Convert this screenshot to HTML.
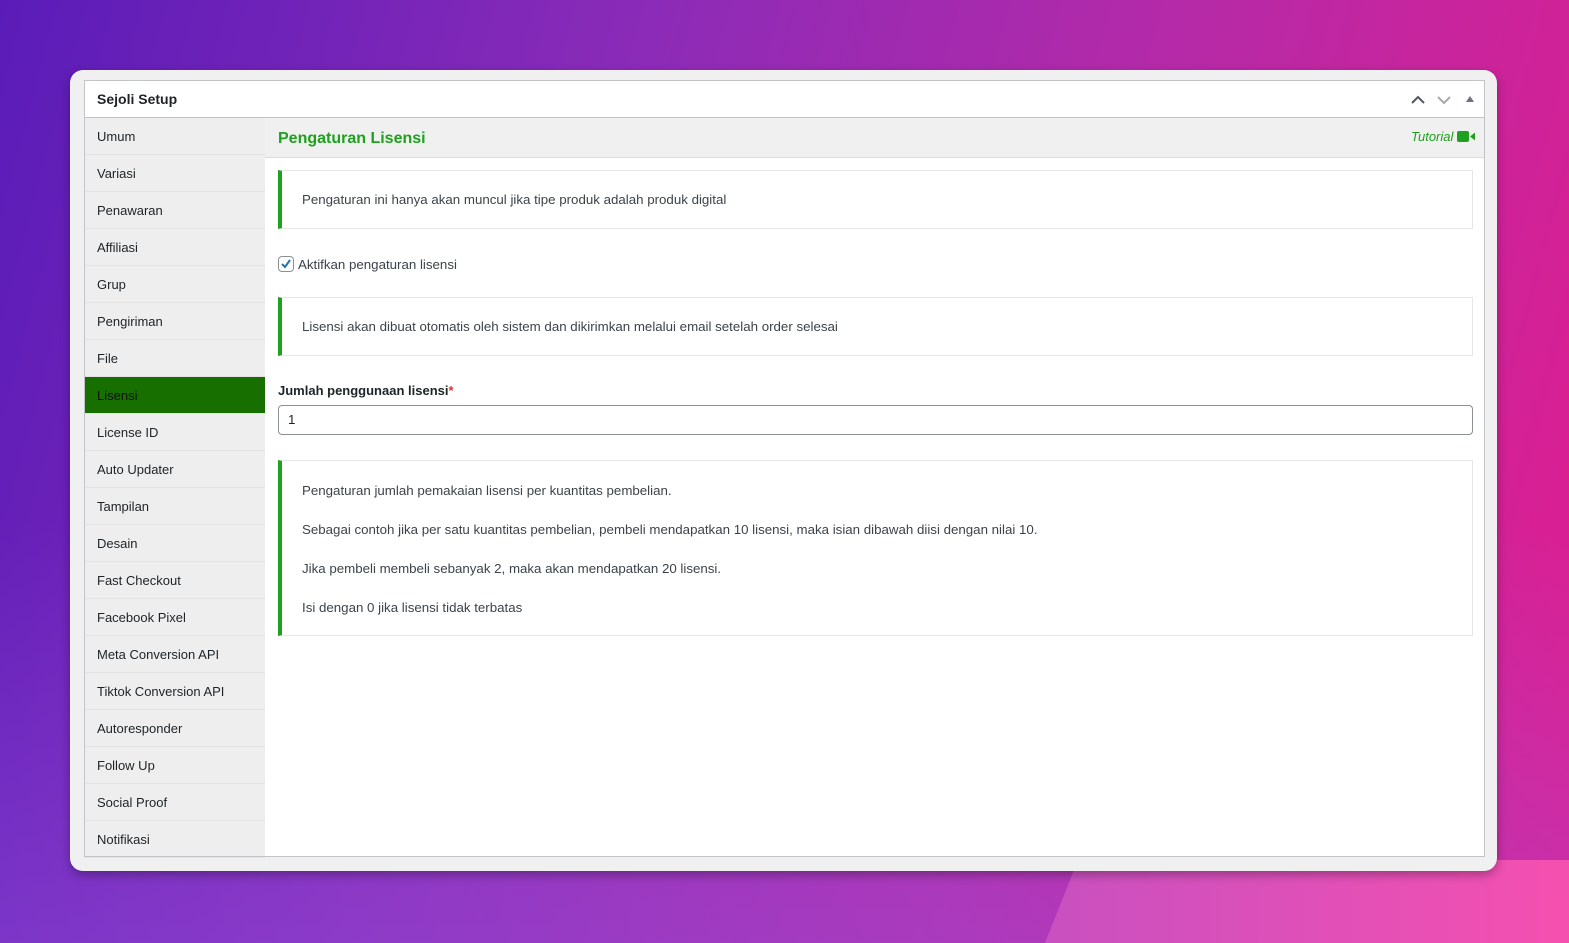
<!DOCTYPE html>
<html><head><meta charset="utf-8"><style>
*{box-sizing:border-box;margin:0;padding:0}
html,body{width:1569px;height:943px;overflow:hidden}
body{font-family:"Liberation Sans",sans-serif;font-size:13px;color:#1d2327;
background:linear-gradient(180deg,rgba(0,0,0,0) 55%,rgba(150,90,230,.35) 100%),linear-gradient(105deg,#5a1cb8 0%,#8a2bb8 35%,#b52aa8 65%,#e11d8e 100%);position:relative}
.bl{position:absolute;left:1040px;top:860px;width:529px;height:83px;background:linear-gradient(90deg,#c850c0,#f550b0);clip-path:polygon(38px 0,529px 0,529px 83px,5px 83px)}
.card{position:absolute;left:70px;top:70px;width:1427px;height:801px;background:#f0f0f0;border-radius:13px;box-shadow:0 4px 10px rgba(0,0,0,.3)}
.box{position:absolute;left:14px;top:10px;width:1401px;height:777px;border:1px solid #c3c4c7;background:#fff}
.hd{height:37px;border-bottom:1px solid #c3c4c7;padding-left:12px;line-height:36px;font-size:14px;font-weight:bold;position:relative}
.ic{position:absolute;top:0;right:0;height:36px}
.side{position:absolute;left:0;top:37px;width:180px;bottom:0;background:#eee}
.side div{height:37px;line-height:37px;padding-left:12px;border-bottom:1px solid #e2e2e2;font-size:13px}
.side .act{background:#176f00;color:#111}
.main{position:absolute;left:180px;top:37px;right:0;bottom:0;font-size:13.3px}
.mh{height:40px;background:#f0f0f0;border-bottom:1px solid #dcdcde;position:relative}
.mh h2{position:absolute;left:13px;top:12px;color:#1fa01f;font-size:16px;font-weight:bold}
.tut{position:absolute;right:8px;top:11px;color:#1fa01f;font-style:italic;font-size:13px}
.note{position:absolute;left:13px;width:1195px;border:1px solid #e6e6e6;border-left:4px solid #1fa01f;color:#3c434a;padding-left:20px}
</style></head><body>
<div class="bl"></div>
<div class="card"><div class="box">
<div class="hd">Sejoli Setup
<svg class="ic" width="90" height="36" viewBox="0 0 90 36"><path d="M18 22l6-6 6 6" fill="none" stroke="#50575e" stroke-width="2"/><path d="M44 16l6 6 6-6" fill="none" stroke="#a7aaad" stroke-width="2"/><path d="M72 21l4-6 4 6z" fill="#6d7278"/></svg></div>
<div class="side">
<div>Umum</div><div>Variasi</div><div>Penawaran</div><div>Affiliasi</div><div>Grup</div><div>Pengiriman</div><div>File</div><div class="act">Lisensi</div><div>License ID</div><div>Auto Updater</div><div>Tampilan</div><div>Desain</div><div>Fast Checkout</div><div>Facebook Pixel</div><div>Meta Conversion API</div><div>Tiktok Conversion API</div><div>Autoresponder</div><div>Follow Up</div><div>Social Proof</div><div>Notifikasi</div>
</div>
<div class="main">
<div class="mh"><h2>Pengaturan Lisensi</h2><span class="tut">Tutorial <svg width="19" height="11" viewBox="0 0 19 11" style="vertical-align:-1px"><rect x="0" y="0" width="12" height="11" rx="2" fill="#1fa01f"/><path d="M13 5.5l5-4v8z" fill="#1fa01f"/></svg></span></div>
<div class="note" style="top:52px;height:59px;line-height:57px">Pengaturan ini hanya akan muncul jika tipe produk adalah produk digital</div>
<div style="position:absolute;left:13px;top:138px;display:flex;align-items:center;color:#3c434a"><span style="width:16px;height:16px;border:1px solid #8c8f94;border-radius:4px;display:inline-block;margin-right:4px;position:relative"><svg width="14" height="14" viewBox="0 0 14 14" style="position:absolute;left:0;top:0"><path d="M3 7l3 3 5-7" fill="none" stroke="#2271b1" stroke-width="2"/></svg></span>Aktifkan pengaturan lisensi</div>
<div class="note" style="top:179px;height:59px;line-height:57px">Lisensi akan dibuat otomatis oleh sistem dan dikirimkan melalui email setelah order selesai</div>
<div style="position:absolute;left:13px;top:265px;font-weight:bold;font-size:13px">Jumlah penggunaan lisensi<span style="color:#d63638">*</span></div>
<div style="position:absolute;left:13px;top:287px;width:1195px;height:30px;border:1px solid #8c8f94;border-radius:4px;line-height:28px;padding-left:9px">1</div>
<div class="note" style="top:342px;height:176px;padding-top:23px;line-height:13px">
<p style="margin-bottom:26px">Pengaturan jumlah pemakaian lisensi per kuantitas pembelian.</p>
<p style="margin-bottom:26px">Sebagai contoh jika per satu kuantitas pembelian, pembeli mendapatkan 10 lisensi, maka isian dibawah diisi dengan nilai 10.</p>
<p style="margin-bottom:26px">Jika pembeli membeli sebanyak 2, maka akan mendapatkan 20 lisensi.</p>
<p>Isi dengan 0 jika lisensi tidak terbatas</p></div>
</div>
</div></div>
</body></html>
